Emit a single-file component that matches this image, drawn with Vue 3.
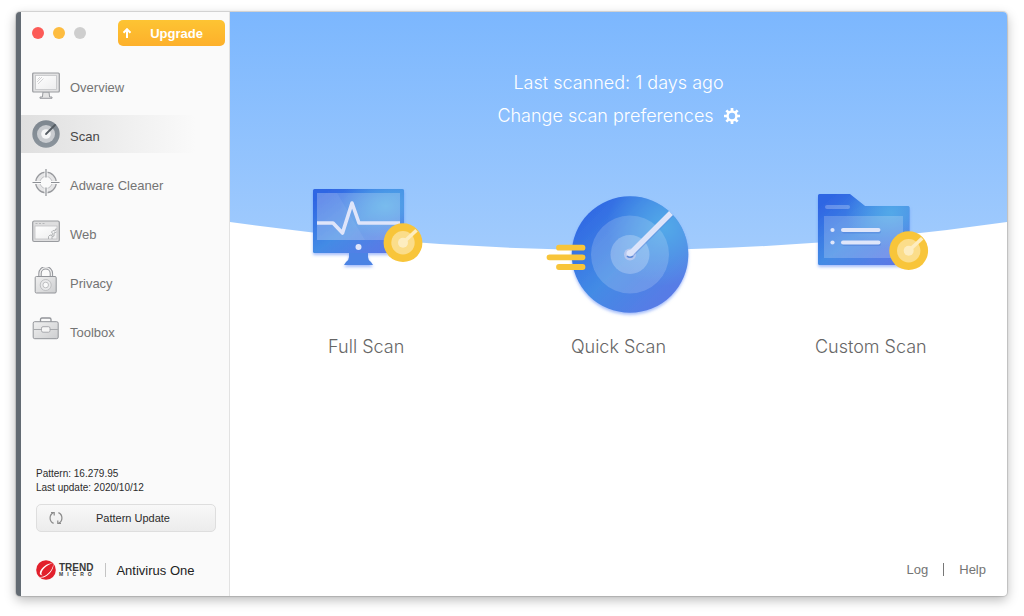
<template>
  <div class="desktop">
    <div class="window">
      <aside class="sidebar">
        <header class="titlebar">
          <div class="lights">
            <button class="light close" type="button" aria-label="Close"></button>
            <button class="light minimize" type="button" aria-label="Minimize"></button>
            <button class="light zoom" type="button" aria-label="Zoom" disabled></button>
          </div>
          <button class="upgrade" type="button">
            <svg width="10" height="12" viewBox="0 0 10 12" fill="none" stroke="#fff" stroke-width="2">
              <path d="M5 11V2.5M1.5 5.8L5 2.2l3.500 3.600" />
            </svg>
            <span>Upgrade</span>
          </button>
        </header>

        <nav class="menu">
          <a
            v-for="item in menu"
            :key="item.id"
            href="#"
            class="menu-item"
            :class="{ active: item.id === current }"
            @click.prevent="current = item.id"
          >
            <svg v-if="item.id === 'overview'" class="menu-icon" viewBox="0 0 28 28">
              <path d="M11 21h6l.6 5H20v1.300H8V26h2.400z" fill="#e4e4e4" stroke="#9a9ca0" />
              <rect x=".7" y="2" width="26.600" height="19" rx="1" fill="#e2e2e3" stroke="#999b9f" stroke-width="1.200" />
              <rect x="3.500" y="4.500" width="21" height="14" fill="url(#screen)" stroke="#c3c4c6" stroke-width=".8" />
              <path d="M5 11l5-5M6 13l5.500-5.500M5.500 8.500L8 6" stroke="#c9c9cb" stroke-width=".8" />
            </svg>
            <svg v-else-if="item.id === 'scan'" class="menu-icon" viewBox="0 0 28 28">
              <circle cx="14" cy="14" r="13.700" fill="url(#steel)" />
              <circle cx="14" cy="14" r="9" fill="#c9ccd0" />
              <circle cx="14" cy="14" r="4.800" fill="#f5f6f7" />
              <path d="M14 14l9-9" stroke="#545b62" stroke-width="1.800" stroke-linecap="round" />
            </svg>
            <svg v-else-if="item.id === 'adware'" class="menu-icon" viewBox="0 0 28 28" fill="none">
              <circle cx="14" cy="13.500" r="8.300" stroke="#e6e6e7" stroke-width="4" />
              <circle cx="14" cy="13.500" r="10.300" stroke="#989a9e" stroke-width="1.200" />
              <circle cx="14" cy="13.500" r="6" stroke="#bdbec1" stroke-width="1" />
              <path d="M14 0V9.500M14 17.500V27M.5 13.500H10M18 13.500h9.500" stroke="#fafafa" stroke-width="3" />
              <path d="M14 0V8.500M14 18.500V27M.5 13.500H9M19 13.500h8.500" stroke="#8d9095" stroke-width="1.200" />
            </svg>
            <svg v-else-if="item.id === 'web'" class="menu-icon" viewBox="0 0 28 28">
              <rect x=".7" y="3" width="26.600" height="20.500" rx="1.500" fill="#dededf" stroke="#999b9f" stroke-width="1.200" />
              <path d="M3.500 5.500h2M7 5.500h2M10.500 5.500h2" stroke="#b5b6b8" />
              <rect x="3" y="8" width="22" height="13" fill="url(#screen)" stroke="#c0c1c3" stroke-width=".8" />
              <path
                d="M16.500 21v-2.500l1.500-1.500 2 .5.500-2-1-1.500 1.500-1.500 2 .5.500-2h1.500M20 21v-2.500l2-.5v-3l2.500-1"
                fill="none"
                stroke="#a9abae"
                stroke-width=".9"
              />
            </svg>
            <svg v-else-if="item.id === 'privacy'" class="menu-icon" viewBox="0 0 28 28">
              <path d="M8 10V6.500a5.700 5.700 0 0111.400 0V10" fill="none" stroke="#929499" stroke-width="3.400" />
              <path d="M8 10V6.500a5.700 5.700 0 0111.400 0V10" fill="none" stroke="#efefef" stroke-width="1.400" />
              <rect x="3.200" y="9.500" width="21" height="16.500" rx="1.200" fill="url(#metal)" stroke="#929499" />
              <circle cx="13.700" cy="18" r="5.500" fill="#e9e9ea" stroke="#b5b6b9" stroke-width=".8" />
              <circle cx="13.700" cy="18" r="2.800" fill="#fafafa" stroke="#b0b1b4" stroke-width=".8" />
            </svg>
            <svg v-else class="menu-icon" viewBox="0 0 28 28">
              <path d="M8.500 6V3.500Q8.500 2 10 2h7.500Q19 2 19 3.500V6" fill="none" stroke="#929499" stroke-width="1.300" />
              <rect x="1.200" y="5.700" width="25" height="17" rx="1.500" fill="url(#metal)" stroke="#929499" />
              <path d="M1.500 13.500h24.500" stroke="#a8aaad" />
              <rect x="9.500" y="10.700" width="8.500" height="5.500" rx="1.500" fill="#f5f5f5" stroke="#a0a2a6" stroke-width=".9" />
            </svg>
            <span>{{ item.label }}</span>
          </a>
        </nav>

        <footer class="sidebar-footer">
          <p class="pattern">Pattern: 16.279.95<br />Last update: 2020/10/12</p>
          <button class="update" type="button">
            <svg width="14" height="14" viewBox="0 0 14 14" fill="none" stroke="#8b8b8b" stroke-width="1.200">
              <path d="M4.600 12.400A5.900 5.900 0 014.600 1.600M9.400 1.600a5.900 5.900 0 010 10.800" />
              <path d="M2 1.500h3.200v3M12 12.500H8.800v-3" />
            </svg>
            <span>Pattern Update</span>
          </button>
          <div class="brand">
            <svg width="20" height="20" viewBox="0 0 20 20">
              <circle cx="10" cy="10" r="9.800" fill="#e2202c" />
              <path
                d="M16.800 3.200C12 2.600 5.500 7.200 4 11.800c-.7 2.300.3 3.600 2.600 3.400-1.300-.6-1.500-1.800-.7-3.500C7.500 8 12 4.300 16.800 3.200z"
                fill="#fff"
              />
              <path d="M16.800 3.200c1.500 3.800-3.300 10.300-8.300 12.800-3 1.500-5.300 1.300-6.500-.2l.9 1.100c1.500 1.100 4 .9 6.700-.5C15 13.500 19 6.800 16.800 3.200z" fill="#fff" />
            </svg>
            <div class="brand-name">
              <span class="trend">TREND</span>
              <span class="micro">MICRO</span>
            </div>
            <span class="brand-product">Antivirus One</span>
          </div>
        </footer>
      </aside>

      <main class="content">
        <svg class="wave" viewBox="0 0 777 237" preserveAspectRatio="none">
          <path d="M0 0H777V209Q388.500 265 0 209z" fill="url(#sky)" />
        </svg>

        <section class="status">
          <p>Last scanned: 1 days ago</p>
          <a href="#" class="preferences">
            Change scan preferences
            <svg width="16" height="16" viewBox="0 0 18 18" fill="none" stroke="#fff">
              <circle cx="9" cy="9" r="5" stroke-width="2.800" />
              <path
                v-for="n in 8"
                :key="n"
                d="M9 0V4"
                stroke-width="3"
                :transform="`rotate(${n * 45} 9 9)`"
              />
            </svg>
          </a>
        </section>

        <section class="scans">
          <button class="scan" type="button">
            <svg class="scan-art" viewBox="0 0 150 140">
              <g filter="url(#glow)">
                <path d="M58 72h19v5q0 3 3 5l2 3H53l2-3q3-2 3-5z" fill="#4b83e4" />
                <rect x="22" y="9" width="91" height="64" rx="1.500" fill="url(#blue)" />
              </g>
              <rect x="22" y="9" width="91" height="64" rx="1.500" fill="url(#shine)" />
              <rect x="26" y="13" width="83" height="47" fill="#fff" fill-opacity=".22" />
              <path d="M26 13h20l28 47H26z" fill="#fff" fill-opacity=".06" />
              <path d="M26 43h16l9.500 10L61 23l7 20h41" fill="none" stroke="#dfe5fa" stroke-width="3.600" stroke-linejoin="round" />
              <circle cx="67.500" cy="67" r="3" fill="#dfe5fa" />
              <use href="#coin" x="112" y="62.700" />
            </svg>
            <span>Full Scan</span>
          </button>

          <button class="scan" type="button">
            <svg class="scan-art" viewBox="0 0 150 140">
              <circle cx="87" cy="74.500" r="58.300" fill="url(#blue)" filter="url(#glow)" />
              <circle cx="87" cy="74.500" r="58.300" fill="url(#shine)" />
              <circle cx="87" cy="74.500" r="39" fill="#fff" fill-opacity=".17" />
              <circle cx="87" cy="74.500" r="19.500" fill="#fff" fill-opacity=".24" />
              <circle cx="87" cy="74.500" r="6" fill="#b6c8f0" />
              <path d="M87 75.500l41-41.500" stroke="#5b86dc" stroke-opacity=".5" stroke-width="6" />
              <path d="M87 74l41-41" stroke="#dce4fa" stroke-width="5.500" />
              <circle cx="87" cy="73.500" r="3.500" fill="#dce4fa" />
              <path d="M84 76a4 4 0 006 0" fill="none" stroke="#5c87d6" stroke-width="1.500" />
              <path d="M16 67.700h23.500M6.500 77.300h33M16 87h23.500" stroke="#f8c53a" stroke-width="5.800" stroke-linecap="round" />
            </svg>
            <span>Quick Scan</span>
          </button>

          <button class="scan" type="button">
            <svg class="scan-art" viewBox="0 0 150 140">
              <path d="M23.500 14H54l15 12h43q1.500 0 1.500 1.500v56q0 1.500-1.500 1.500H23.500Q22 85 22 83.500v-68Q22 14 23.500 14z" fill="url(#blue)" filter="url(#glow)" />
              <path d="M23.500 14H54l15 12h43q1.500 0 1.500 1.500v56q0 1.500-1.500 1.500H23.500Q22 85 22 83.500v-68Q22 14 23.500 14z" fill="url(#shine)" />
              <rect x="29" y="25" width="25" height="4" rx="2" fill="#fff" fill-opacity=".25" />
              <rect x="28" y="36" width="79" height="42" fill="#fff" fill-opacity=".2" />
              <g fill="#3e70d0" fill-opacity=".35">
                <rect x="46" y="49.500" width="39" height="4" rx="2" />
                <rect x="46" y="62" width="39" height="4" rx="2" />
              </g>
              <g fill="#dfe6fa">
                <circle cx="36.500" cy="50" r="2.100" />
                <circle cx="36.500" cy="62.500" r="2.100" />
                <rect x="45" y="48" width="39.500" height="4" rx="2" />
                <rect x="45" y="60.500" width="39.500" height="4" rx="2" />
              </g>
              <use href="#coin" x="112.700" y="70.700" />
            </svg>
            <span>Custom Scan</span>
          </button>
        </section>

        <footer class="links">
          <a href="#">Log</a>
          <span class="divider"></span>
          <a href="#">Help</a>
        </footer>
      </main>
    </div>

    <!-- shared gradients and symbols -->
    <svg class="defs" width="0" height="0" aria-hidden="true">
      <defs>
        <linearGradient id="sky" x1="0" y1="0" x2="0" y2="1">
          <stop offset="0" stop-color="#7cb7fe" />
          <stop offset="1" stop-color="#a1cbfd" />
        </linearGradient>
        <linearGradient id="blue" x1="0" y1="0" x2="1" y2="1">
          <stop offset=".1" stop-color="#2f66e3" />
          <stop offset=".5" stop-color="#438be5" />
          <stop offset=".9" stop-color="#5b78e6" />
        </linearGradient>
        <radialGradient id="shine" cx=".8" cy=".27" r=".5">
          <stop offset="0" stop-color="#55aee9" stop-opacity=".85" />
          <stop offset="1" stop-color="#55aee9" stop-opacity="0" />
        </radialGradient>
        <linearGradient id="screen" x1="0" y1="0" x2="1" y2="1">
          <stop offset="0" stop-color="#fff" />
          <stop offset="1" stop-color="#ededee" />
        </linearGradient>
        <linearGradient id="metal" x1="0" y1="0" x2="1" y2="1">
          <stop offset="0" stop-color="#f0f0f0" />
          <stop offset="1" stop-color="#cdced0" />
        </linearGradient>
        <linearGradient id="steel" x1="0" y1="0" x2="0" y2="1">
          <stop offset="0" stop-color="#7d868f" />
          <stop offset="1" stop-color="#8b949c" />
        </linearGradient>
        <filter id="glow" x="-20%" y="-20%" width="140%" height="140%">
          <feDropShadow dx="0" dy="2" stdDeviation="1.500" flood-color="#4a7df5" flood-opacity=".5" />
        </filter>
        <g id="coin">
          <circle r="19.400" fill="#f8c53a" />
          <circle r="11.700" fill="#fbdd8a" />
          <circle r="5" fill="#fdedc0" />
          <path d="M0 0L13.500-12.500" stroke="#fdedc0" stroke-width="3.600" />
        </g>
      </defs>
    </svg>
  </div>
</template>

<script setup>
import { ref } from 'vue'

const menu = [
  { id: 'overview', label: 'Overview' },
  { id: 'scan', label: 'Scan' },
  { id: 'adware', label: 'Adware Cleaner' },
  { id: 'web', label: 'Web' },
  { id: 'privacy', label: 'Privacy' },
  { id: 'toolbox', label: 'Toolbox' }
]

const current = ref('scan')
</script>

<style>
body {
  margin: 0;
  background: #fff;
}
</style>

<style scoped>
* {
  box-sizing: border-box;
}

button {
  font-family: inherit;
  margin: 0;
  padding: 0;
  border: 0;
  background: none;
  cursor: pointer;
}

a {
  color: inherit;
  text-decoration: none;
}

p {
  margin: 0;
}

.desktop {
  display: flex;
  min-height: 100vh;
  padding: 12px 17px 20px 16px;
  font-family: "Liberation Sans", Arial, sans-serif;
}

.window {
  flex: 1;
  display: flex;
  border-left: 5px solid #636b73;
  border-radius: 4px;
  background: #fff;
  overflow: hidden;
  box-shadow: 0 0 1px 1px rgba(0, 0, 0, 0.14), 0 4px 12px rgba(0, 0, 0, 0.28);
}

.sidebar {
  width: 209px;
  flex-shrink: 0;
  display: flex;
  flex-direction: column;
  background: #fafafa;
  border-right: 1px solid #e2e2e2;
}

.titlebar {
  display: flex;
  align-items: center;
  justify-content: space-between;
  padding: 8px 4px 0 11px;
}

.lights {
  display: flex;
  gap: 9px;
}

.light {
  width: 12px;
  height: 12px;
  border-radius: 50%;
}

.close {
  background: #fc5b57;
}

.minimize {
  background: #fdbc40;
}

.zoom {
  background: #cecece;
}

.upgrade {
  width: 107px;
  height: 26px;
  display: flex;
  align-items: center;
  padding: 0 4px;
  border-radius: 5px;
  background: linear-gradient(#fdc433, #fdb02b);
  color: #fff;
  font-size: 13px;
  font-weight: 700;
}

.upgrade span {
  flex: 1;
  text-align: center;
}

.menu {
  display: flex;
  flex-direction: column;
  gap: 11px;
  margin-top: 20px;
}

.menu-item {
  height: 38px;
  display: flex;
  align-items: center;
  gap: 10px;
  padding-left: 11px;
  color: #747474;
  font-size: 13px;
}

.menu-item span {
  padding-top: 4px;
}

.menu-item.active {
  color: #474747;
  background: linear-gradient(90deg, #dfdfdf, #fafafa 84%);
}

.menu-icon {
  width: 28px;
  height: 28px;
}

.sidebar-footer {
  margin-top: auto;
  padding: 0 13px 16px 15px;
  color: #2c2c2c;
}

.pattern {
  font-size: 10px;
  line-height: 14px;
}

.update {
  width: 100%;
  height: 28px;
  display: flex;
  align-items: center;
  margin: 9px 0 28px;
  padding: 0 12px;
  border: 1px solid #dedede;
  border-radius: 5px;
  background: linear-gradient(#f8f8f8, #ececec);
  color: #2c2c2c;
  font-size: 11px;
}

.update span {
  flex: 1;
  text-align: center;
}

.brand {
  display: flex;
  align-items: center;
}

.brand-name {
  display: flex;
  flex-direction: column;
  margin-left: 3px;
  padding-right: 12px;
  border-right: 1px solid #c4c4c4;
  color: #3a3a3a;
  font-weight: 700;
}

.trend {
  font-size: 10px;
  line-height: 9px;
}

.micro {
  font-size: 5px;
  line-height: 5px;
  letter-spacing: 4px;
  margin-right: -4px;
}

.brand-product {
  margin-left: 10px;
  font-size: 13px;
  color: #222;
}

.content {
  position: relative;
  flex: 1;
  display: flex;
  flex-direction: column;
}

.wave {
  position: absolute;
  top: 0;
  left: 0;
  width: 100%;
  height: 238px;
}

.status {
  position: relative;
  display: flex;
  flex-direction: column;
  align-items: center;
  padding-top: 54px;
  color: #fff;
  font-family: Inter, "Liberation Sans", sans-serif;
  font-size: 18px;
  font-weight: 300;
  line-height: 33px;
}

.preferences {
  display: flex;
  align-items: center;
  gap: 10px;
}

.scans {
  position: relative;
  display: grid;
  grid-template-columns: repeat(3, 1fr);
  margin-top: 48px;
  padding: 0 10px;
}

.scan {
  display: flex;
  flex-direction: column;
  align-items: center;
  gap: 12px;
  color: #666;
  font-family: Inter, "Liberation Sans", sans-serif;
  font-size: 18px;
  font-weight: 300;
  line-height: 30px;
}

.scan-art {
  width: 150px;
  height: 140px;
}

.links {
  display: flex;
  align-items: center;
  justify-content: flex-end;
  gap: 15px;
  margin-top: auto;
  padding: 0 21px 19px;
  color: #747474;
  font-size: 13px;
}

.divider {
  width: 1px;
  height: 13px;
  background: #777;
}

.defs {
  position: absolute;
}
</style>
